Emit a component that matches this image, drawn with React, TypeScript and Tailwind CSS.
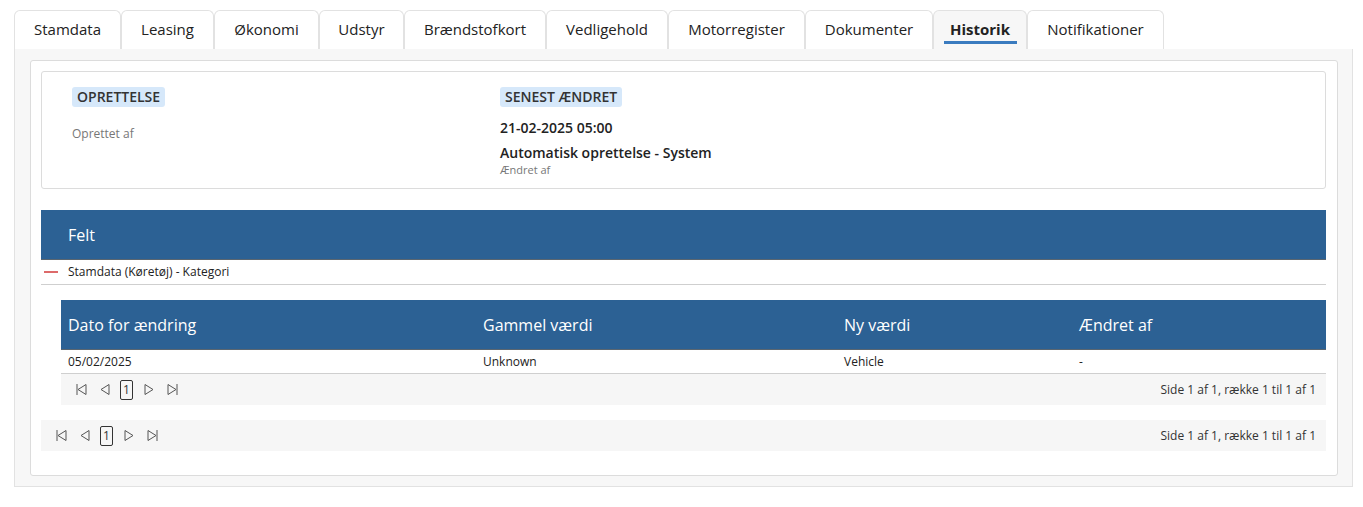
import React from "react"

const tabs = [
  { label: "Stamdata", w: "w-[107px]" },
  { label: "Leasing", w: "w-[93px]" },
  { label: "Økonomi", w: "w-[105px]" },
  { label: "Udstyr", w: "w-[85px]" },
  { label: "Brændstofkort", w: "w-[142px]" },
  { label: "Vedligehold", w: "w-[122px]" },
  { label: "Motorregister", w: "w-[137px]" },
  { label: "Dokumenter", w: "w-[128px]" },
  { label: "Historik", w: "w-[94px]", active: true },
  { label: "Notifikationer", w: "w-[137px]" },
]

function Tri({ dir, bar }: { dir: "l" | "r"; bar?: boolean }) {
  return (
    <svg width="11" height="13" viewBox="0 0 11 13" fill="none" stroke="#555" strokeWidth="1">
      {dir === "l" ? (
        <>
          <path d="M10 1.5 L2 6.5 L10 11.5 Z" />
          {bar && <path d="M1 1 V12" />}
        </>
      ) : (
        <>
          <path d="M1 1.5 L9 6.5 L1 11.5 Z" />
          {bar && <path d="M10 1 V12" />}
        </>
      )}
    </svg>
  )
}

function Pager() {
  return (
    <div className="h-[31px] bg-[#f6f6f6] flex items-center justify-between pl-[15px] pr-[10px] text-[12px] text-[#333]">
      <div className="flex items-center">
        <span className="mr-[12px] flex"><Tri dir="l" bar /></span>
        <span className="mr-[10px] flex"><Tri dir="l" /></span>
        <span className="w-[13px] h-[20px] border border-[#333] rounded-[2px] flex items-center justify-center text-[12px] leading-none mr-[11px]">1</span>
        <span className="mr-[12px] flex"><Tri dir="r" /></span>
        <span className="flex"><Tri dir="r" bar /></span>
      </div>
      <div>Side 1 af 1, række 1 til 1 af 1</div>
    </div>
  )
}

export default function App() {
  return (
    <div className="min-h-[507px] bg-white pt-[10px] pl-[14px] pr-[10px] text-[#222]" style={{ fontFamily: '"Open Sans", "Noto Sans", sans-serif' }}>
      <div className="flex h-[39px]">
        {tabs.map((t) => (
          <div
            key={t.label}
            className={`${t.w} relative border border-b-0 border-[#e2e2e2] rounded-t-[6px] flex items-center justify-center text-[15px] pb-[2px] ${t.active ? "bg-[#f7f7f7] font-bold" : "bg-white"}`}
          >
            {t.label}
            {t.active && <div className="absolute left-[10px] right-[9px] bottom-[5px] h-[3px] bg-[#3a7bbf]" />}
          </div>
        ))}
      </div>

      <div className="h-[438px] bg-[#f7f7f7] border border-t-0 border-[#e2e2e2] pt-[11px] pl-[15px] pr-[14px]">
        <div className="h-[416px] bg-white border border-[#dcdcdc] rounded-[3px] p-[10px] pr-[11px]">
          <div className="h-[118px] border border-[#dcdcdc] rounded-[3px] flex">
            <div className="w-[428px] pl-[30px] pt-[12px]">
              <span className="inline-block bg-[#d6e8fa] rounded-[3px] px-[5px] h-[20px] leading-[20px] text-[14px] font-semibold text-[#333]">OPRETTELSE</span>
              <div className="mt-[17px] text-[12px] text-[#777]">Oprettet af</div>
            </div>
            <div className="pl-[30px] pt-[12px]">
              <span className="inline-block bg-[#d6e8fa] rounded-[3px] px-[5px] h-[20px] leading-[20px] text-[14px] font-semibold text-[#333]">SENEST ÆNDRET</span>
              <div className="mt-[10px] text-[14px] font-semibold leading-[20px]">21-02-2025 05:00</div>
              <div className="mt-[5px] text-[14px] font-semibold leading-[20px]">Automatisk oprettelse - System</div>
              <div className="text-[11px] text-[#777] leading-[14px]">Ændret af</div>
            </div>
          </div>

          <div className="mt-[21px] h-[50px] bg-[#2c6194] border-b border-[#5b6670] flex items-center pl-[27px] text-white text-[16px]">Felt</div>
          <div className="h-[25px] border-b border-[#cfcfcf] flex items-center text-[12px]">
            <span className="w-[14px] h-[2px] bg-[#dd6a6a] ml-[3px] mr-[10px]" />
            Stamdata (Køretøj) - Kategori
          </div>

          <div className="ml-[20px] mt-[15px]">
            <div className="h-[50px] bg-[#2c6194] border-b border-[#5b6670] flex items-center text-white text-[16px]">
              <div className="w-[415px] pl-[7px]">Dato for ændring</div>
              <div className="w-[361px] pl-[7px]">Gammel værdi</div>
              <div className="w-[235px] pl-[7px]">Ny værdi</div>
              <div className="pl-[7px]">Ændret af</div>
            </div>
            <div className="h-[24px] border-b border-[#cfcfcf] flex items-center text-[12px]">
              <div className="w-[415px] pl-[7px]">05/02/2025</div>
              <div className="w-[361px] pl-[7px]">Unknown</div>
              <div className="w-[235px] pl-[7px]">Vehicle</div>
              <div className="pl-[7px]">-</div>
            </div>
            <Pager />
          </div>

          <div className="mt-[15px]">
            <Pager />
          </div>
        </div>
      </div>
    </div>
  )
}
